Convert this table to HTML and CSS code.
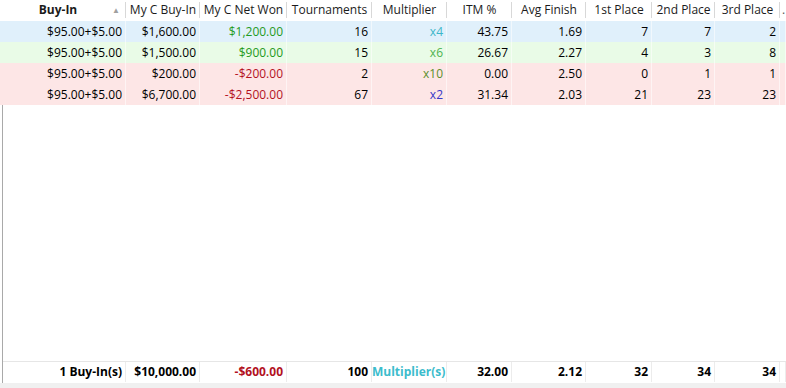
FILE: index.html
```html
<!DOCTYPE html>
<html>
<head>
<meta charset="utf-8">
<link rel="stylesheet" href="styles.css">
</head>
<body>
<div class="grid">
  <div class="row head">
    <div class="c sorted"><b>Buy-In</b><span class="arrow">&#9650;</span></div>
    <div class="c">My C Buy-In</div>
    <div class="c">My C Net Won</div>
    <div class="c">Tournaments</div>
    <div class="c">Multiplier</div>
    <div class="c">ITM %</div>
    <div class="c">Avg Finish</div>
    <div class="c">1st Place</div>
    <div class="c">2nd Place</div>
    <div class="c">3rd Place</div>
    <div class="c last">.</div>
  </div>
  <div class="row blue">
    <div class="c">$95.00+$5.00</div>
    <div class="c">$1,600.00</div>
    <div class="c pos">$1,200.00</div>
    <div class="c">16</div>
    <div class="c m4">x4</div>
    <div class="c">43.75</div>
    <div class="c">1.69</div>
    <div class="c">7</div>
    <div class="c">7</div>
    <div class="c">2</div>
    <div class="c last"></div>
  </div>
  <div class="row green">
    <div class="c">$95.00+$5.00</div>
    <div class="c">$1,500.00</div>
    <div class="c pos">$900.00</div>
    <div class="c">15</div>
    <div class="c m6">x6</div>
    <div class="c">26.67</div>
    <div class="c">2.27</div>
    <div class="c">4</div>
    <div class="c">3</div>
    <div class="c">8</div>
    <div class="c last"></div>
  </div>
  <div class="row pink">
    <div class="c">$95.00+$5.00</div>
    <div class="c">$200.00</div>
    <div class="c neg">-$200.00</div>
    <div class="c">2</div>
    <div class="c m10">x10</div>
    <div class="c">0.00</div>
    <div class="c">2.50</div>
    <div class="c">0</div>
    <div class="c">1</div>
    <div class="c">1</div>
    <div class="c last"></div>
  </div>
  <div class="row pink">
    <div class="c">$95.00+$5.00</div>
    <div class="c">$6,700.00</div>
    <div class="c neg">-$2,500.00</div>
    <div class="c">67</div>
    <div class="c m2">x2</div>
    <div class="c">31.34</div>
    <div class="c">2.03</div>
    <div class="c">21</div>
    <div class="c">23</div>
    <div class="c">23</div>
    <div class="c last"></div>
  </div>
  <div class="lower">
    <div class="empty"></div>
    <div class="row foot">
      <div class="c first">1 Buy-In(s)</div>
      <div class="c">$10,000.00</div>
      <div class="c neg">-$600.00</div>
      <div class="c">100</div>
      <div class="c mult">Multiplier(s)</div>
      <div class="c">32.00</div>
      <div class="c">2.12</div>
      <div class="c">32</div>
      <div class="c">34</div>
      <div class="c">34</div>
      <div class="c last"></div>
    </div>
  </div>
  <div class="hscroll"></div>
</div>
</body>
</html>
```

FILE: styles.css
```css
html, body {
  margin: 0;
  padding: 0;
  background: #ffffff;
  overflow: hidden;
}

body {
  width: 786px;
  height: 388px;
  font-family: "Open Sans", "Noto Sans", sans-serif;
  font-size: 12px;
  color: #000;
}

.grid {
  display: flex;
  flex-direction: column;
  height: 388px;
  width: 786px;
  overflow: hidden;
}

.row {
  display: grid;
  grid-template-columns: 126px 74px 87px 85px 75px 65px 74px 66px 63px 65px 6px;
  height: 21px;
  width: 786px;
}

.c {
  box-sizing: border-box;
  height: 21px;
  line-height: 21px;
  padding: 0 3px 0 2px;
  text-align: right;
  white-space: nowrap;
  overflow: hidden;
  border-right: 1px solid rgba(255, 255, 255, 0.55);
}

.head .c {
  text-align: center;
  color: #1b1b1b;
  padding: 0 2px;
  border-right: none;
  position: relative;
  line-height: 20px;
}

.head .c::after {
  content: "";
  position: absolute;
  right: 0;
  top: 2px;
  bottom: 3px;
  width: 1px;
  background: #d8d8d8;
}

.head .sorted {
  padding-right: 12px;
}

.head .sorted b {
  font-weight: 700;
}

.arrow {
  position: absolute;
  right: 6px;
  top: 0;
  font-size: 8px;
  color: #a0a0a0;
}

.head .last {
  text-align: left;
  padding: 0 0 0 2px;
  color: #555;
}

.head .last::after {
  display: none;
}

.blue { background: #e0f0fb; }
.green { background: #e9fbe7; }
.pink { background: #fde6e6; }

.pos { color: #1f9a22; }
.neg { color: #b3121f; }
.m4 { color: #3cb6c9; }
.m6 { color: #4eb34f; }
.m10 { color: #5b8f2b; }
.m2 { color: #3737c8; }

.lower {
  flex: 1;
  display: flex;
  flex-direction: column;
  margin-left: 2px;
  border-left: 1px solid #a9a9a9;
}

.empty {
  flex: 1;
}

.foot {
  border-top: 1px solid #e6e6e6;
  font-weight: 700;
  grid-template-columns: 123px 74px 87px 85px 75px 65px 74px 66px 63px 65px 6px;
  width: 783px;
  height: 21px;
}

.foot .c {
  height: 20px;
  line-height: 20px;
  border-right: 1px solid #ececec;
}

.foot .mult {
  color: #3cbccc;
  padding-left: 0;
  padding-right: 3px;
}

.hscroll {
  height: 5px;
  background: #f0f0f0;
  flex: none;
}
```
